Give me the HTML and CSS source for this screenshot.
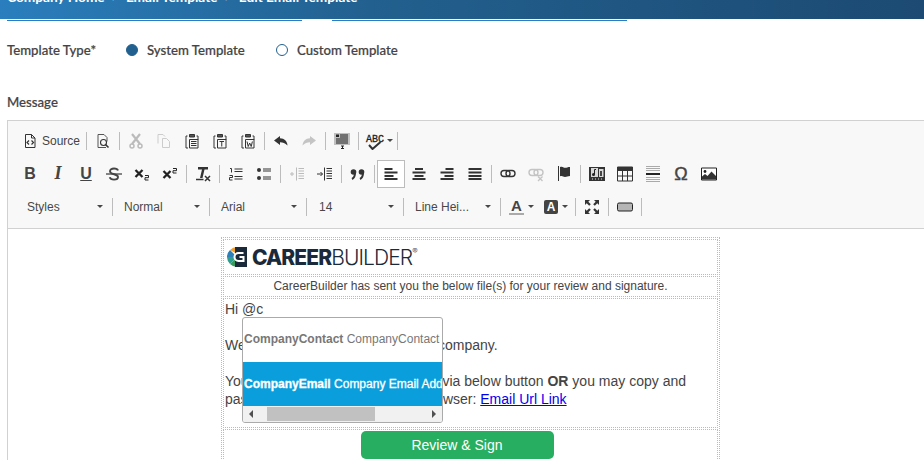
FILE: index.html
```html
<!DOCTYPE html>
<html lang="en">
<head>
  <meta charset="UTF-8" />
  <title>Edit Email Template</title>
  <link rel="stylesheet" href="styles.css">
</head>
<body>
  <svg class="sprites" width="0" height="0">
    <symbol id="i-source" viewBox="0 0 16 16"><path d="M3.5 1.5h6l3.500 3.500v9.500h-9.500z M9.500 1.500v3.500h3.500" fill="none" stroke="#333"/><path d="M7 7.500l-2 2 2 2 M9.500 7.500l2 2-2 2" fill="none" stroke="#333" stroke-width="1.200"/></symbol>
    <symbol id="i-preview" viewBox="0 0 16 16"><path d="M11 14.500h-8v-13h6l3 3v4" fill="none" stroke="#555"/><circle cx="8.500" cy="9.500" r="3" fill="none" stroke="#333" stroke-width="1.100"/><path d="M10.500 11.500l3 3" stroke="#333" stroke-width="1.600"/></symbol>
    <symbol id="i-cut" viewBox="0 0 16 16"><path d="M4 1l8 10 M12 1l-8 10" stroke="#bbb" stroke-width="2.200"/><circle cx="4" cy="13" r="2" fill="none" stroke="#bbb" stroke-width="1.500"/><circle cx="12" cy="13" r="2" fill="none" stroke="#bbb" stroke-width="1.500"/></symbol>
    <symbol id="i-copy" viewBox="0 0 16 16"><path d="M2 10.500v-9h5l2 2 M6.500 5.500h4l3 3v6h-7z" fill="none" stroke="#ccc"/></symbol>
    <symbol id="i-paste" viewBox="0 0 16 16"><path d="M3.500 3h-1.500v12h2 M12.500 3h1.500v4" fill="none" stroke="#333"/><path d="M5.500 1.500h5v2.500h-5z" fill="#555" stroke="#333"/><path d="M5.500 6.500h8.500v8.500h-8.500z" fill="none" stroke="#333"/><path d="M7 8.500h5.500 M7 10.500h5.500 M7 12.500h5.500" stroke="#333"/></symbol>
    <symbol id="i-paste-t" viewBox="0 0 16 16"><path d="M3.500 3h-1.500v12h2 M12.500 3h1.500v4" fill="none" stroke="#333"/><path d="M5.500 1.500h5v2.500h-5z" fill="#555" stroke="#333"/><path d="M5.500 6.500h8.500v8.500h-8.500z" fill="none" stroke="#333"/><path d="M7.500 8.500h4.500 M9.750 8.500v5" stroke="#333"/></symbol>
    <symbol id="i-paste-w" viewBox="0 0 16 16"><path d="M3.500 3h-1.500v12h2 M12.500 3h1.500v4" fill="none" stroke="#333"/><path d="M5.500 1.500h5v2.500h-5z" fill="#555" stroke="#333"/><path d="M5.500 6.500h8.500v8.500h-8.500z" fill="none" stroke="#333"/><path d="M7 8.500l1.200 5 1.500-3.500 1.500 3.500 1.200-5" fill="none" stroke="#333"/></symbol>
    <symbol id="i-undo" viewBox="0 0 16 16"><path d="M7 3l-6 4.500 6 4.500v-2.800c3 0 5 .6 7.500 3.300-.5-4.500-3-7-7.500-7.200z" fill="#333"/></symbol>
    <symbol id="i-redo" viewBox="0 0 16 16"><path d="M9 3l6 4.500-6 4.500v-2.800c-3 0-5 .6-7.500 3.300.5-4.500 3-7 7.500-7.200z" fill="#c4c4c4"/></symbol>
    <symbol id="i-templates" viewBox="0 0 16 16"><path d="M0 0h16v12h-16z" fill="#c0c0c0"/><path d="M2 1.500h3v2.500h-3z" fill="#222"/><path d="M6 2h8 M6 4h8 M2 6h12 M2 8h12 M2 10h12" stroke="#222"/><path d="M7 13h3 M8.500 13v3 M7 15.500h3" stroke="#222"/></symbol>
    <symbol id="i-spell" viewBox="0 0 18 18"><path d="M3 13l3.500 4 8-7" fill="none" stroke="#333" stroke-width="2"/></symbol>
    <symbol id="i-strike" viewBox="0 0 16 16"><path d="M12 4.500c-.5-1.500-2-2-4-2-2.500 0-4 1-4 2.700 0 3.800 8 2.300 8 5.800 0 1.700-1.700 2.600-4 2.600-2.300 0-3.800-.8-4.300-2.400" fill="none" stroke="#444" stroke-width="1.900"/><path d="M0 8h16" stroke="#444" stroke-width="1.300"/></symbol>
    <symbol id="i-sub" viewBox="0 0 16 16"><path d="M1.500 4l7 7 M8.500 4l-7 7" stroke="#222" stroke-width="2.300"/><path d="M11 9.500h3.500v2.200h-3.500v2.300h3.500" fill="none" stroke="#222"/></symbol>
    <symbol id="i-sup" viewBox="0 0 16 16"><path d="M1.500 5l7 7 M8.500 5l-7 7" stroke="#222" stroke-width="2.300"/><path d="M11 2.500h3.500v2.200h-3.500v2.300h3.500" fill="none" stroke="#222"/></symbol>
    <symbol id="i-clear" viewBox="0 0 16 16"><path d="M3 1h10v2.500h-3.500l-2 8.500h-2.500l2-8.500h-4z" fill="#333"/><path d="M1 13.500h7.500" stroke="#333" stroke-width="1.500"/><path d="M10 10l5 5 M15 10l-5 5" stroke="#333" stroke-width="1.500"/></symbol>
    <symbol id="i-ol" viewBox="0 0 16 16"><path d="M6.500 3h8 M6.500 5.500h8 M6.500 10.500h8 M6.500 13h8" stroke="#333"/><path d="M2 2.500h1.500v4 M1.500 9.500h3v2h-3v2.500h3" fill="none" stroke="#333"/></symbol>
    <symbol id="i-ul" viewBox="0 0 16 16"><circle cx="3" cy="4" r="2" fill="#333"/><circle cx="3" cy="12" r="2" fill="#333"/><path d="M7 3h8 M7 5h8 M7 11h8 M7 13h8" stroke="#333"/></symbol>
    <symbol id="i-outdent" viewBox="0 0 16 16"><path d="M1 8h4 M3 6v4 M7.500 1.500v13" stroke="#bbb"/><path d="M9.500 2.500h5.500 M9.500 5h5.500 M9.500 7.500h5.500 M9.500 10h5.500 M9.500 12.500h5.500" stroke="#bbb"/></symbol>
    <symbol id="i-indent" viewBox="0 0 16 16"><path d="M0 8h5.500 M3.500 6l2 2-2 2 M7.500 1.500v13" fill="none" stroke="#333"/><path d="M9.500 2.500h5.500 M9.500 5h5.500 M9.500 7.500h5.500 M9.500 10h5.500 M9.500 12.500h5.500" stroke="#333"/></symbol>
    <symbol id="i-quote" viewBox="0 0 16 16"><circle cx="3.500" cy="6" r="2.800" fill="#333"/><circle cx="11.500" cy="6" r="2.800" fill="#333"/><path d="M5 7c0 3-1 5-3 6 M13 7c0 3-1 5-3 6" fill="none" stroke="#333" stroke-width="2"/></symbol>
    <symbol id="i-left" viewBox="0 0 16 16"><path d="M1.500 3h8 M1.500 6.500h13 M1.500 10h9 M1.500 13h13" stroke="#333" stroke-width="2"/></symbol>
    <symbol id="i-center" viewBox="0 0 16 16"><path d="M4 3h8 M1.500 6.500h13 M3.500 10h9 M1.500 13h13" stroke="#333" stroke-width="2"/></symbol>
    <symbol id="i-right" viewBox="0 0 16 16"><path d="M6.500 3h8 M1.500 6.500h13 M5.500 10h9 M1.500 13h13" stroke="#333" stroke-width="2"/></symbol>
    <symbol id="i-justify" viewBox="0 0 16 16"><path d="M1.500 3h13 M1.500 6.500h13 M1.500 10h13 M1.500 13h13" stroke="#333" stroke-width="2"/></symbol>
    <symbol id="i-link" viewBox="0 0 16 16"><rect x="1" y="4.500" width="9" height="6" rx="3" fill="none" stroke="#333" stroke-width="1.400"/><rect x="6" y="4.500" width="9" height="6" rx="3" fill="none" stroke="#333" stroke-width="1.400"/></symbol>
    <symbol id="i-unlink" viewBox="0 0 16 16"><rect x="1" y="3.500" width="9" height="6" rx="3" fill="none" stroke="#c4c4c4" stroke-width="1.400"/><rect x="6" y="3.500" width="9" height="6" rx="3" fill="none" stroke="#c4c4c4" stroke-width="1.400"/><path d="M10 10.500l4.500 4.500 M14.500 10.500l-4.500 4.500" stroke="#c4c4c4" stroke-width="1.300"/></symbol>
    <symbol id="i-anchor" viewBox="0 0 16 16"><path d="M2.500 0v15" stroke="#333"/><path d="M4 1c3-1 3 .8 5 .8s2.500-.8 5-.8v9c-2.500 0-3 1-5 1s-2-1.500-5-.8z" fill="#333"/></symbol>
    <symbol id="i-media" viewBox="0 0 16 16"><path d="M0 1h16v14h-16z" fill="#333"/><path d="M3 12.500h1v1h-1z M6 12.500h1v1h-1z M9 12.500h1v1h-1z M12 12.500h1v1h-1z" fill="#ddd"/><path d="M2 2h7v9h-7z M10 3h4.500v8h-4.500z" fill="#d8d8d8"/><circle cx="4.500" cy="8.500" r="1.500" fill="#222"/><path d="M5.500 8.500v-5h1.500" fill="none" stroke="#222"/><path d="M11 5h2v5h-2z" fill="#444"/></symbol>
    <symbol id="i-table" viewBox="0 0 16 16"><path d="M.5 1h15v14h-15z" fill="none" stroke="#333"/><path d="M0 1h16v4h-16z" fill="#333"/><path d="M5.500 5v10 M10.500 5v10 M0 10h16" stroke="#333"/></symbol>
    <symbol id="i-hr" viewBox="0 0 16 16"><path d="M1 .5h14 M1 2.500h14 M1 4.500h14 M1 11.500h14 M1 13.500h14 M1 15.500h14" stroke="#aaa"/><path d="M1 8h14" stroke="#222" stroke-width="2"/></symbol>
    <symbol id="i-image" viewBox="0 0 16 16"><path d="M.5 2h15v12h-15z" fill="#fff" stroke="#222"/><circle cx="4" cy="5.500" r="1.400" fill="#222"/><path d="M1 13.500v-3l3-2.500 2.500 2 4-4.500 4.500 4.500v3.500z" fill="#333"/></symbol>
    <symbol id="i-max" viewBox="0 0 16 16"><path d="M1 1h5l-1.700 1.700 2.500 2.500-1.600 1.600-2.500-2.500-1.700 1.700z M15 1v5l-1.700-1.700-2.500 2.500-1.600-1.600 2.500-2.500-1.700-1.700z M1 15v-5l1.700 1.700 2.500-2.500 1.600 1.600-2.500 2.500 1.700 1.700z M15 15h-5l1.700-1.700-2.500-2.500 1.600-1.600 2.500 2.500 1.700-1.700z" fill="#333"/></symbol>
    <symbol id="i-button" viewBox="0 0 16 16"><rect x=".5" y="4" width="15" height="8" rx="1.500" fill="#b5b5b5" stroke="#222"/></symbol>
    <symbol id="i-mark" viewBox="0 0 20 20"><path d="M10 0a10 10 0 0 0-7 3l7 4z" fill="#f0a12c"/><path d="M3 3a10 10 0 0 0-3 7h10z" fill="#2f7fb8"/><path d="M0 10a10 10 0 0 0 3 7l7-7z" fill="#2f9e8f"/><path d="M3 17a10 10 0 0 0 7 3v-10z" fill="#3a9c5c"/><path d="M8 0h12v20h-12z" fill="#1b2a3a"/><path d="M16.500 6h-5a4 4 0 0 0 0 8h5v-4h-4" fill="none" stroke="#fff" stroke-width="2"/></symbol>
  </svg>

  <header class="top-bar">
    <div class="crumbs">Company Home &nbsp;&gt;&nbsp; Email Template &nbsp;&gt;&nbsp; Edit Email Template</div>
  </header>
  <div class="tab-lines">
    <span class="tab-line first"></span>
    <span class="tab-line second"></span>
  </div>

  <div class="type-row">
    <span class="field-label type-label">Template Type*</span>
    <span class="radio checked"></span><span class="field-label radio-text">System Template</span>
    <span class="radio"></span><span class="field-label">Custom Template</span>
  </div>

  <div class="field-label message-label">Message</div>

  <div class="editor">
    <div class="toolbar">
      <div class="tool-row">
        <span class="btn source"><svg class="icon"><use href="#i-source"/></svg><span>Source</span></span>
        <i class="sep"></i>
        <span class="btn"><svg class="icon"><use href="#i-preview"/></svg></span>
        <i class="sep"></i>
        <span class="btn"><svg class="icon"><use href="#i-cut"/></svg></span>
        <span class="btn"><svg class="icon"><use href="#i-copy"/></svg></span>
        <span class="btn"><svg class="icon"><use href="#i-paste"/></svg></span>
        <span class="btn"><svg class="icon"><use href="#i-paste-t"/></svg></span>
        <span class="btn"><svg class="icon"><use href="#i-paste-w"/></svg></span>
        <i class="sep"></i>
        <span class="btn"><svg class="icon"><use href="#i-undo"/></svg></span>
        <span class="btn"><svg class="icon"><use href="#i-redo"/></svg></span>
        <i class="sep"></i>
        <span class="btn"><svg class="icon"><use href="#i-templates"/></svg></span>
        <i class="sep"></i>
        <span class="btn spell"><span class="spell-mark"><b>ABC</b><svg class="spell-check"><use href="#i-spell"/></svg></span><i class="arrow"></i></span>
        <i class="sep"></i>
      </div>
      <div class="tool-row">
        <span class="btn letter bold">B</span>
        <span class="btn letter ital">I</span>
        <span class="btn letter under">U</span>
        <span class="btn"><svg class="icon"><use href="#i-strike"/></svg></span>
        <span class="btn"><svg class="icon"><use href="#i-sub"/></svg></span>
        <span class="btn"><svg class="icon"><use href="#i-sup"/></svg></span>
        <i class="sep"></i>
        <span class="btn"><svg class="icon"><use href="#i-clear"/></svg></span>
        <i class="sep"></i>
        <span class="btn"><svg class="icon"><use href="#i-ol"/></svg></span>
        <span class="btn"><svg class="icon"><use href="#i-ul"/></svg></span>
        <i class="sep"></i>
        <span class="btn"><svg class="icon"><use href="#i-outdent"/></svg></span>
        <span class="btn"><svg class="icon"><use href="#i-indent"/></svg></span>
        <i class="sep"></i>
        <span class="btn"><svg class="icon"><use href="#i-quote"/></svg></span>
        <i class="sep"></i>
        <span class="btn active"><svg class="icon"><use href="#i-left"/></svg></span>
        <span class="btn"><svg class="icon"><use href="#i-center"/></svg></span>
        <span class="btn"><svg class="icon"><use href="#i-right"/></svg></span>
        <span class="btn"><svg class="icon"><use href="#i-justify"/></svg></span>
        <i class="sep"></i>
        <span class="btn"><svg class="icon"><use href="#i-link"/></svg></span>
        <span class="btn"><svg class="icon"><use href="#i-unlink"/></svg></span>
        <span class="btn"><svg class="icon"><use href="#i-anchor"/></svg></span>
        <i class="sep"></i>
        <span class="btn"><svg class="icon"><use href="#i-media"/></svg></span>
        <span class="btn"><svg class="icon"><use href="#i-table"/></svg></span>
        <span class="btn"><svg class="icon"><use href="#i-hr"/></svg></span>
        <span class="btn letter omega">&Omega;</span>
        <span class="btn"><svg class="icon"><use href="#i-image"/></svg></span>
      </div>
      <div class="tool-row">
        <span class="combo wide"><span>Styles</span><i class="arrow"></i></span>
        <i class="sep"></i>
        <span class="combo"><span>Normal</span><i class="arrow"></i></span>
        <i class="sep"></i>
        <span class="combo"><span>Arial</span><i class="arrow"></i></span>
        <i class="sep"></i>
        <span class="combo"><span class="size-val">14</span><i class="arrow"></i></span>
        <i class="sep"></i>
        <span class="combo"><span>Line Hei...</span><i class="arrow"></i></span>
        <i class="sep"></i>
        <span class="btn color"><span class="a-text">A</span><i class="arrow"></i></span>
        <span class="btn color bg-color"><span class="a-back">A</span><i class="arrow"></i></span>
        <i class="sep"></i>
        <span class="btn"><svg class="icon"><use href="#i-max"/></svg></span>
        <i class="sep"></i>
        <span class="btn"><svg class="icon"><use href="#i-button"/></svg></span>
        <i class="sep"></i>
      </div>
    </div>

    <div class="content">
      <div class="mail">
        <div class="cell logo-cell">
          <svg class="mark"><use href="#i-mark"/></svg>
          <span class="logo-text"><b>CAREER</b>BUILDER<sup>&reg;</sup></span>
        </div>
        <div class="cell sent-cell">CareerBuilder has sent you the below file(s) for your review and signature.</div>
        <div class="cell body-cell">
          <p>Hi @c</p>
          <p>We have sent a document to your company.</p>
          <p>You may sign the document online via below button <b>OR</b> you may copy and paste the document link in your browser: <a href="#">Email Url Link</a></p>
        </div>
        <div class="cell button-cell"><span class="review">Review &amp; Sign</span></div>
      </div>

      <div class="mention">
        <div class="mention-item"><b>CompanyContact</b> CompanyContact</div>
        <div class="mention-item selected"><b>CompanyEmail</b> Company Email Address</div>
        <div class="fake-scroll">
          <i class="scroll-left"></i>
          <span class="scroll-track"><span class="scroll-thumb"></span></span>
          <i class="scroll-right"></i>
        </div>
      </div>
    </div>
  </div>
</body>
</html>
```

FILE: styles.css
```css
html, body {
  height: 460px;
  overflow: hidden;
}
body {
  margin: 0;
  background: white;
  font-family: "Liberation Sans", Arial, sans-serif;
  color: #333;
}
.sprites {
  position: absolute;
}
.top-bar {
  height: 19px;
  padding-left: 7px;
  background: linear-gradient(90deg, #2a7ebd 0%, #22608f 40%, #1c4a72 100%);
  overflow: hidden;
}
.crumbs {
  margin-top: -12px;
  font-family: Lato, sans-serif;
  font-size: 13.7px;
  font-weight: 700;
  line-height: 17px;
  color: white;
}
.tab-lines {
  display: flex;
  gap: 30px;
  margin-top: 1px;
  padding-left: 7px;
}
.tab-line {
  width: 295px;
  height: 1px;
  background: #2a7ebd;
}
.type-row {
  display: flex;
  align-items: center;
  height: 20px;
  margin-top: 19px;
  padding-left: 7px;
}
.field-label {
  font-family: Lato, sans-serif;
  font-size: 13.2px;
  font-weight: 500;
  color: #444;
  -webkit-text-stroke: 0.2px #444;
}
.type-label {
  width: 119px;
}
.radio {
  box-sizing: border-box;
  width: 12px;
  height: 12px;
  margin-right: 9px;
  border: 1px solid #22608f;
  border-radius: 50%;
}
.radio.checked {
  background: #22608f;
}
.radio-text {
  width: 120px;
  margin-right: 9px;
}
.message-label {
  margin-top: 32px;
  padding-left: 7px;
  line-height: 20px;
}
.editor {
  margin: 8px 0 0 7px;
  border: 1px solid #d1d1d1;
  border-right: none;
  border-bottom: none;
}
.toolbar {
  box-sizing: border-box;
  height: 108px;
  padding: 3px 0 0 8px;
  background: #f8f8f8;
  border-bottom: 1px solid #d1d1d1;
}
.tool-row {
  display: flex;
  align-items: center;
  height: 33px;
}
.btn {
  display: flex;
  flex: none;
  align-items: center;
  justify-content: center;
  box-sizing: border-box;
  width: 28px;
  height: 28px;
}
.btn.active {
  background: white;
  border: 1px solid #bcbcbc;
}
.btn.source {
  width: 68px;
  justify-content: flex-start;
  padding-left: 6px;
  font-size: 12px;
  color: #444;
}
.btn.source span {
  margin-left: 4px;
}
.icon {
  width: 16px;
  height: 16px;
}
.sep {
  flex: none;
  width: 1px;
  height: 18px;
  margin: 0 2px;
  background: #bcbcbc;
}
.letter {
  font-size: 16px;
  font-weight: 700;
  color: #444;
}
.ital {
  font-family: "Liberation Serif", serif;
  font-style: italic;
  font-size: 18px;
}
.under {
  text-decoration: underline;
}
.omega {
  padding-top: 2px;
  font-size: 18px;
  font-weight: 400;
  -webkit-text-stroke: 0.4px #444;
}
.arrow {
  flex: none;
  width: 0;
  height: 0;
  border-top: 3px solid #474747;
  border-left: 3px solid transparent;
  border-right: 3px solid transparent;
}
.spell {
  width: 34px;
  justify-content: flex-start;
  padding-left: 5px;
}
.spell-mark {
  position: relative;
  display: block;
  width: 16px;
  height: 18px;
  font-family: "Liberation Mono", monospace;
  line-height: 12px;
}
.spell-mark b {
  font-size: 10px;
  font-weight: 400;
  -webkit-text-stroke: 0.3px #222;
  color: #222;
}
.spell-check {
  position: absolute;
  left: 0;
  top: 0;
  width: 18px;
  height: 18px;
}
.spell .arrow {
  margin-left: 5px;
}
.combo {
  display: flex;
  flex: none;
  align-items: center;
  justify-content: space-between;
  box-sizing: border-box;
  width: 92px;
  height: 26px;
  padding: 0 7px 0 9px;
  font-size: 12px;
  color: #484848;
}
.combo.wide {
  width: 94px;
  padding-left: 11px;
}
.size-val {
  margin-left: 1px;
}
.btn.color {
  width: 33px;
  justify-content: flex-start;
  padding-left: 6px;
}
.btn.color .arrow {
  margin-left: 4px;
}
.a-text {
  width: 15px;
  font-size: 15px;
  font-weight: 700;
  line-height: 15px;
  text-align: center;
  color: #444;
  border-bottom: 2px solid #aaa;
}
.btn.bg-color {
  width: 37px;
  padding-left: 8px;
}
.a-back {
  width: 14px;
  height: 14px;
  font-size: 12px;
  font-weight: 700;
  line-height: 14px;
  text-align: center;
  color: white;
  background: #444;
  border-radius: 2px;
}
.content {
  position: relative;
  box-sizing: border-box;
  height: 231px;
  overflow: hidden;
  background: white;
  padding-top: 8px;
}
.mail {
  width: 497px;
  margin-left: 213px;
  border: 1px dotted #bbb;
  font-size: 14px;
  color: #444;
}
.cell {
  margin: 1px;
  border: 1px dotted #bbb;
}
.logo-cell {
  display: flex;
  align-items: center;
  height: 34px;
  padding-left: 3px;
}
.mark {
  width: 20px;
  height: 20px;
}
.logo-text {
  margin-left: 5px;
  font-family: Inter, sans-serif;
  font-size: 21px;
  font-weight: 300;
  letter-spacing: -0.9px;
  color: #1b2a3a;
}
.logo-text b {
  font-weight: 800;
}
.logo-text sup {
  font-size: 8px;
  vertical-align: 11px;
  line-height: 0;
}
.sent-cell {
  height: 19px;
  font-size: 12px;
  line-height: 19px;
  text-align: center;
}
.body-cell {
  height: 128px;
  padding-left: 1px;
  padding-right: 10px;
  line-height: 18px;
}
.body-cell p {
  margin: 0 0 18px;
}
.body-cell p:first-child {
  line-height: 20px;
  margin-bottom: 17px;
}
.body-cell a {
  color: #0000ee;
}
.button-cell {
  height: 60px;
  padding-right: 27px;
  text-align: center;
}
.review {
  display: inline-block;
  width: 193px;
  height: 28px;
  margin-top: 1px;
  font-size: 14px;
  line-height: 28px;
  color: white;
  background: #28ae60;
  border-radius: 5px;
}
.mention {
  position: absolute;
  left: 234px;
  top: 88px;
  box-sizing: border-box;
  width: 201px;
  height: 106px;
  overflow: hidden;
  background: white;
  border: 1px solid #aaa;
  border-radius: 3px;
  font-size: 12px;
  color: #777;
  white-space: nowrap;
}
.mention-item {
  height: 44px;
  padding-left: 1px;
  line-height: 43px;
  overflow: hidden;
}
.mention-item b {
  font-weight: 700;
}
.mention-item.selected {
  line-height: 45px;
  color: white;
  background: #0a9fdc;
  -webkit-text-stroke: 0.3px white;
}
.fake-scroll {
  display: flex;
  align-items: center;
  height: 16px;
  background: #f1f1f1;
}
.scroll-left, .scroll-right {
  flex: none;
  width: 0;
  height: 0;
  border-top: 4px solid transparent;
  border-bottom: 4px solid transparent;
}
.scroll-left {
  margin-left: 6px;
  border-right: 4px solid #505050;
}
.scroll-right {
  margin-right: 6px;
  border-left: 4px solid #505050;
}
.scroll-track {
  flex: 1;
  padding-left: 14px;
}
.scroll-thumb {
  display: block;
  width: 108px;
  height: 14px;
  background: #c1c1c1;
}
```
